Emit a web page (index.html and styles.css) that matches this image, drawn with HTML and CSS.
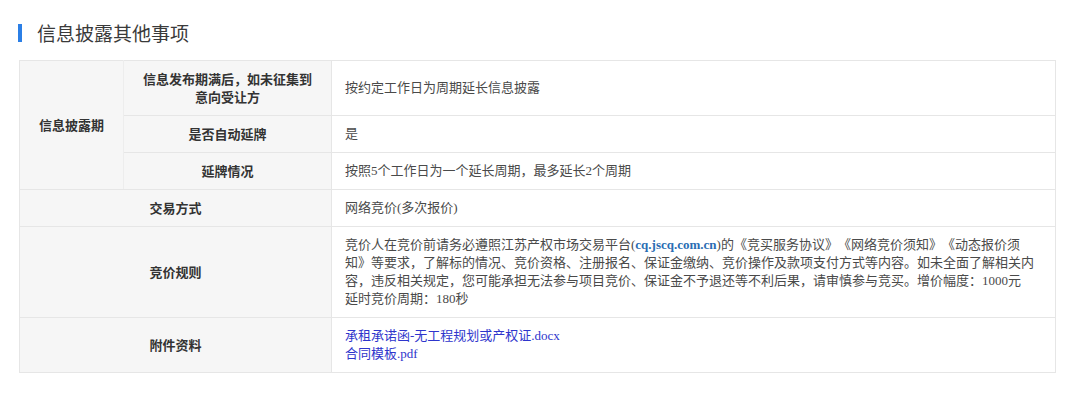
FILE: index.html
```html
<!DOCTYPE html>
<html lang="zh-CN">
<head>
<meta charset="utf-8">
<title>信息披露其他事项</title>
<link rel="stylesheet" href="styles.css">
</head>
<body>
<div class="page">
  <h2 class="section-title">信息披露其他事项</h2>
  <table class="info-table">
    <colgroup>
      <col class="col-a">
      <col class="col-b">
      <col class="col-c">
    </colgroup>
    <tbody>
      <tr>
        <td class="label label-main" rowspan="3">信息披露期</td>
        <td class="label label-sub">信息发布期满后，如未征集到意向受让方</td>
        <td class="value">按约定工作日为周期延长信息披露</td>
      </tr>
      <tr>
        <td class="label label-sub">是否自动延牌</td>
        <td class="value">是</td>
      </tr>
      <tr>
        <td class="label label-sub">延牌情况</td>
        <td class="value">按照5个工作日为一个延长周期，最多延长2个周期</td>
      </tr>
      <tr>
        <td class="label" colspan="2">交易方式</td>
        <td class="value">网络竞价(多次报价)</td>
      </tr>
      <tr>
        <td class="label" colspan="2">竞价规则</td>
        <td class="value value-rules">竞价人在竞价前请务必遵照江苏产权市场交易平台(<span class="site">cq.jscq.com.cn</span>)的《竞买服务协议》《网络竞价须知》《动态报价须知》等要求，了解标的情况、竞价资格、注册报名、保证金缴纳、竞价操作及款项支付方式等内容。如未全面了解相关内容，违反相关规定，您可能承担无法参与项目竞价、保证金不予退还等不利后果，请审慎参与竞买。增价幅度：1000元<br>延时竞价周期：180秒</td>
      </tr>
      <tr>
        <td class="label" colspan="2">附件资料</td>
        <td class="value">
          <a class="file" href="#">承租承诺函-无工程规划或产权证.docx</a><br>
          <a class="file" href="#">合同模板.pdf</a>
        </td>
      </tr>
    </tbody>
  </table>
</div>
</body>
</html>
```

FILE: styles.css
```css
html, body {
  margin: 0;
  padding: 0;
  background: #ffffff;
}

body {
  font-family: "Noto Sans CJK SC", "Microsoft YaHei", sans-serif;
  color: #333333;
  text-spacing-trim: space-all;
}

.page {
  padding: 21px 24px 0 19px;
}

.section-title {
  display: flex;
  align-items: center;
  gap: 15px;
  margin: 0 0 15px -1px;
  font-size: 19px;
  line-height: 24px;
  font-weight: normal;
  color: #3a3a3a;
}

.section-title::before {
  content: "";
  display: block;
  width: 4px;
  height: 18px;
  background: #2b7fe6;
}

.info-table {
  width: 1037px;
  table-layout: fixed;
  border-collapse: collapse;
  font-size: 13px;
}

.col-a { width: 104px; }
.col-b { width: 208px; }

.info-table td {
  border: 1px solid #e6e6e6;
  padding: 9px 13px;
  line-height: 18px;
  vertical-align: middle;
  text-spacing-trim: space-all;
}

.label {
  background: #f6f6f6;
  text-align: center;
  font-weight: bold;
  color: #333333;
}

.label-sub {
  padding-left: 15px !important;
  padding-right: 15px !important;
}

.label-main {
  border-right-color: #ededed !important;
}

.value {
  background: #ffffff;
  color: #4a4a4a;
  font-family: "Liberation Serif", "Noto Sans CJK SC", serif;
}

.value-rules {
  padding-right: 14px !important;
}

.site {
  color: #2a6db3;
  font-weight: bold;
}

.file {
  color: #2e35cc;
  text-decoration: none;
}
```
